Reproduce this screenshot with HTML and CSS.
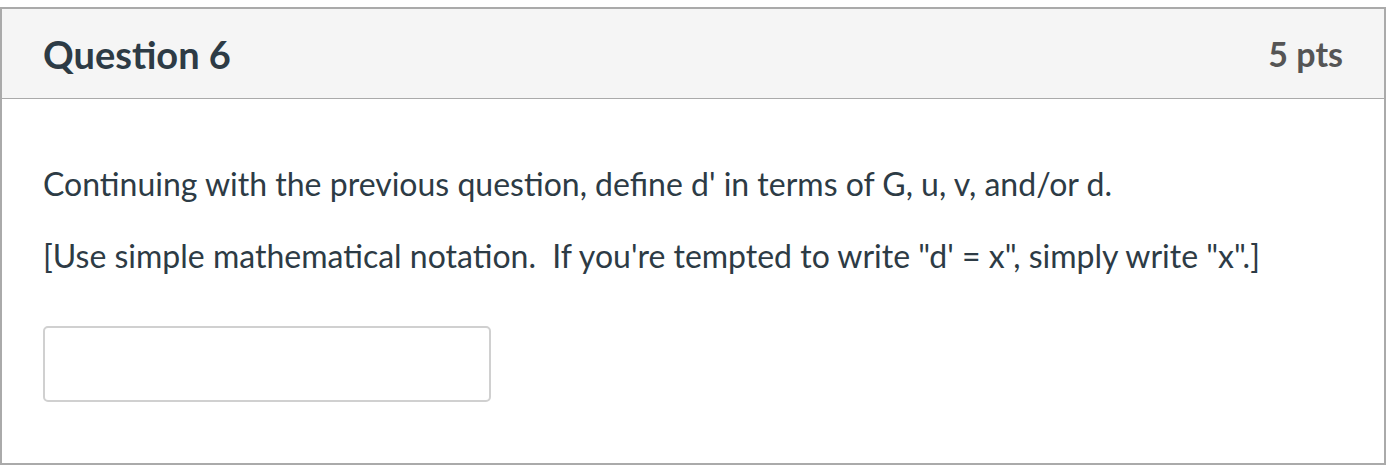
FILE: index.html
```html
<!DOCTYPE html>
<html lang="en">
<head>
    <meta charset="UTF-8">
    <meta name="viewport" content="width=device-width, initial-scale=1.0">
    <title>Question 6</title>
    <link rel="stylesheet" href="styles.css">
</head>
<body>
    <div class="question">
        <div class="header">
            <h2 class="title">Question 6</h2>
            <span class="points">5 pts</span>
        </div>
        <div class="content">
            <p>Continuing with the previous question, define d' in terms of G, u, v, and/or d.</p>
            <p>[Use simple mathematical notation.&nbsp; If you're tempted to write "d' = x", simply write "x".]</p>
            <input type="text" class="answer">
        </div>
    </div>
</body>
</html>
```

FILE: styles.css
```css
body { margin: 0; padding-top: 7px; font-family: Lato, "Open Sans", sans-serif; color: #2d3b45; background: #fff; }
.question { width: 1386px; height: 458px; box-sizing: border-box; border: 2px solid #aaa; }
.header { display: flex; justify-content: space-between; align-items: center; height: 90px; box-sizing: border-box; padding: 0 41px 0 41px; background: #f5f5f5; border-bottom: 1px solid #aaa; }
.title { margin: 0; font-size: 38px; font-weight: 700; }
.points { font-size: 34px; font-weight: 700; color: #555; }
.content { padding: 65px 41px 0 41px; }
.content p { margin: 0 0 32px 0; font-size: 32px; line-height: 40px; }
.answer { display: block; width: 448px; height: 76px; box-sizing: border-box; margin-top: 50px; border: 2px solid #d0d0d0; border-radius: 5px; background: #fff; }
```
